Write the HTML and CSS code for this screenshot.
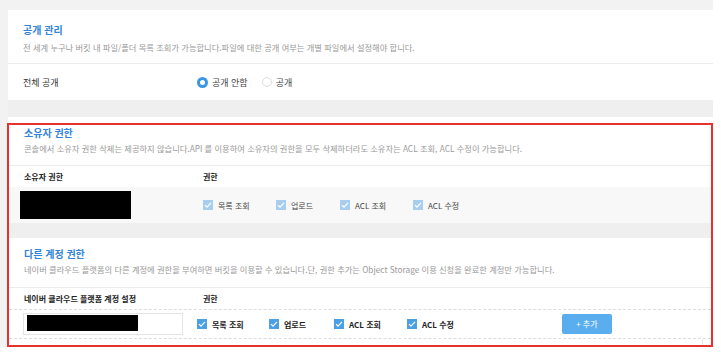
FILE: index.html
```html
<!DOCTYPE html>
<html lang="ko">
<head>
    <meta charset="UTF-8">
    <title>Bucket 권한 관리</title>
    <link rel="stylesheet" href="styles.css">
</head>
<body>
<div class="page">
    <div class="panel">
        <div class="section-head">
            <h2 class="section-title">공개 관리</h2>
            <p class="section-desc">전 세계 누구나 버킷 내 파일/폴더 목록 조회가 가능합니다.파일에 대한 공개 여부는 개별 파일에서 설정해야 합니다.</p>
        </div>
        <div class="public-row">
            <span class="row-label">전체 공개</span>
            <div class="radios">
                <label class="radio"><span class="radio-dot checked"></span>공개 안함</label>
                <label class="radio"><span class="radio-dot"></span>공개</label>
            </div>
        </div>
    </div>

    <div class="band"></div>

    <div class="highlight">
        <div class="section-head compact">
            <h2 class="section-title">소유자 권한</h2>
            <p class="section-desc">콘솔에서 소유자 권한 삭제는 제공하지 않습니다.API 를 이용하여 소유자의 권한을 모두 삭제하더라도 소유자는 ACL 조회, ACL 수정이 가능합니다.</p>
        </div>
        <div class="table-head">
            <span class="col-name">소유자 권한</span>
            <span class="col-perm">권한</span>
        </div>
        <div class="table-row owner-row">
            <div class="col-name"><div class="masked owner-mask"></div></div>
            <div class="col-perm perms">
                <label class="check disabled"><span class="box"><svg viewBox="0 0 10 10"><path d="M2 5.2l2 2 4-4.4" /></svg></span>목록 조회</label>
                <label class="check disabled"><span class="box"><svg viewBox="0 0 10 10"><path d="M2 5.2l2 2 4-4.4" /></svg></span>업로드</label>
                <label class="check disabled"><span class="box"><svg viewBox="0 0 10 10"><path d="M2 5.2l2 2 4-4.4" /></svg></span>ACL 조회</label>
                <label class="check disabled"><span class="box"><svg viewBox="0 0 10 10"><path d="M2 5.2l2 2 4-4.4" /></svg></span>ACL 수정</label>
            </div>
        </div>
        <div class="band inner"></div>

        <div class="section-head compact second">
            <h2 class="section-title">다른 계정 권한</h2>
            <p class="section-desc">네이버 클라우드 플랫폼의 다른 계정에 권한을 부여하면 버킷을 이용할 수 있습니다.단, 권한 추가는 Object Storage 이용 신청을 완료한 계정만 가능합니다.</p>
        </div>
        <div class="table-head dashed">
            <span class="col-name">네이버 클라우드 플랫폼 계정 설정</span>
            <span class="col-perm">권한</span>
        </div>
        <div class="table-row account-row">
            <div class="col-name"><div class="input"><div class="masked input-mask"></div></div></div>
            <div class="col-perm perms active">
                <label class="check"><span class="box"><svg viewBox="0 0 10 10"><path d="M2 5.2l2 2 4-4.4" /></svg></span>목록 조회</label>
                <label class="check"><span class="box"><svg viewBox="0 0 10 10"><path d="M2 5.2l2 2 4-4.4" /></svg></span>업로드</label>
                <label class="check"><span class="box"><svg viewBox="0 0 10 10"><path d="M2 5.2l2 2 4-4.4" /></svg></span>ACL 조회</label>
                <label class="check"><span class="box"><svg viewBox="0 0 10 10"><path d="M2 5.2l2 2 4-4.4" /></svg></span>ACL 수정</label>
            </div>
            <a href="#" class="add-button">+ 추가</a>
        </div>
        <div class="row-tail"></div>
    </div>
</div>
</body>
</html>
```

FILE: styles.css
```css
body {
    margin: 0;
    background-color: #fff;
    font-family: "Noto Sans CJK KR", "Noto Sans", sans-serif;
    color: #333;
}

.page {
    width: 705px;
    padding: 10px 0 0 8px;
    background-color: #f2f2f2;
}

.panel {
    background-color: #fff;
}

.section-head {
    padding: 12px 15px 10px;
    border-bottom: 1px solid #ececec;
}

.section-head.compact {
    padding-top: 0;
    padding-bottom: 11px;
}

.section-head.second {
    padding-top: 0;
    padding-bottom: 12px;
}

.section-title {
    margin: 0;
    font-size: 10px;
    font-weight: 700;
    line-height: 16px;
    color: #3384d8;
}

.section-desc {
    margin: 3px 0 0;
    font-size: 8.25px;
    line-height: 12px;
    color: #999;
}

.compact .section-desc {
    margin-top: 1px;
}

.public-row {
    display: flex;
    align-items: center;
    height: 36px;
    padding: 0 15px;
}

.row-label {
    width: 174px;
    font-size: 9px;
}

.radios {
    display: flex;
    gap: 14px;
}

.radio {
    display: flex;
    align-items: center;
    gap: 4px;
    font-size: 9px;
    color: #444;
}

.radio-dot {
    width: 8px;
    height: 8px;
    border: 1px solid #ddd;
    border-radius: 50%;
    background-color: #fff;
}

.radio-dot.checked {
    width: 5px;
    height: 5px;
    border: 3px solid #3a97e6;
}

.band {
    height: 17px;
    margin-bottom: 6px;
    background-color: #efefef;
    box-shadow: 0 6px 0 #fff;
}

.band.inner {
    height: 15px;
    margin: 0 0 8px;
    box-shadow: 0 8px 0 #fff;
}

.highlight {
    margin-left: -1px;
    border: 2px solid #e5322d;
    background-color: #fff;
}

.table-head {
    display: flex;
    align-items: center;
    height: 21px;
    padding: 0 15px;
    font-size: 8px;
    font-weight: 700;
    color: #222;
}

.table-head.dashed {
    border-bottom: 1px dashed #ddd;
}

.col-name {
    width: 179px;
    flex-shrink: 0;
}

.table-row {
    display: flex;
    align-items: center;
    padding: 0 15px 0 11px;
}

.owner-row {
    height: 36px;
    background-color: #f8f8f8;
}

.owner-row .col-name {
    width: 183px;
}

.masked {
    background-color: #000;
}

.owner-mask {
    width: 111px;
    height: 28px;
}

.account-row {
    height: 28px;
    padding-left: 14px;
    border-bottom: 1px dashed #ddd;
}

.row-tail {
    height: 6px;
    margin-right: 8px;
    border-right: 1px solid #e6e6e6;
}

.account-row .col-name {
    width: 174px;
}

.input {
    width: 152px;
    height: 18px;
    padding: 1px 3px;
    border: 1px solid #e3e3e3;
}

.input-mask {
    width: 111px;
    height: 16px;
}

.perms {
    display: flex;
    align-items: center;
}

.check {
    display: flex;
    align-items: center;
    gap: 5px;
    font-size: 8px;
    color: #444;
}

.perms .check:nth-child(1) { width: 73px; }
.perms .check:nth-child(2) { width: 64px; }
.perms .check:nth-child(3) { width: 73px; }

.perms.active .check {
    font-weight: 700;
    color: #222;
}

.perms.active .check:nth-child(1) { width: 72px; }
.perms.active .check:nth-child(2) { width: 65px; }
.perms.active .check:nth-child(3) { width: 73px; }

.box {
    width: 10px;
    height: 10px;
    background-color: #a9cdee;
}

.perms.active .box {
    background-color: #4b9fe3;
}

.box svg {
    display: block;
    width: 10px;
    height: 10px;
    fill: none;
    stroke: #fff;
    stroke-width: 1.2;
}

.add-button {
    margin-left: 108px;
    width: 50px;
    height: 20px;
    line-height: 20px;
    text-align: center;
    font-size: 8px;
    color: #fff;
    text-decoration: none;
    background-color: #5aaeee;
    border-radius: 2px;
}
```
